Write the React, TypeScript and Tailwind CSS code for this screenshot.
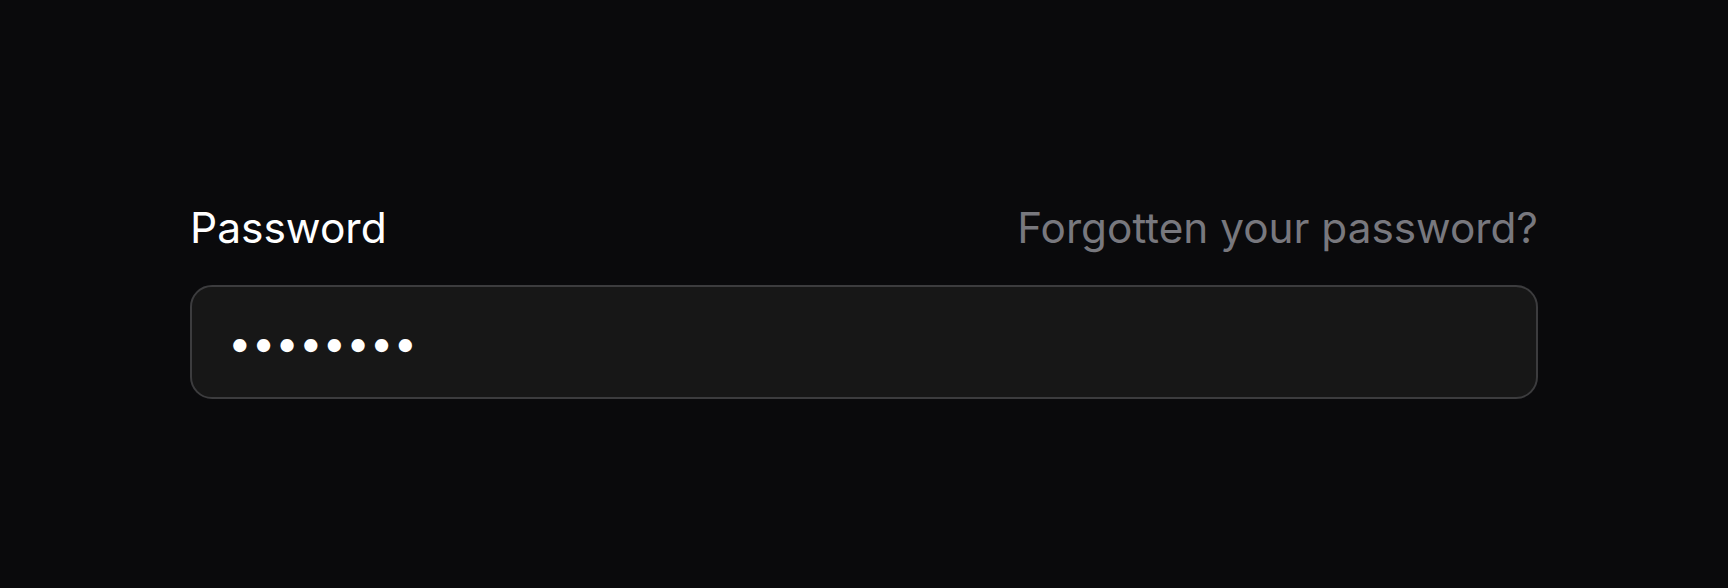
import React from 'react';

const App: React.FC = () => {
  return (
    <div
      className="min-h-screen w-full bg-[#0a0a0c] pt-[204px]"
      style={{ fontFamily: 'Inter, "Noto Sans", sans-serif' }}
    >
      <div className="mx-auto w-[1348px]">
        {/* Label row */}
        <div className="flex items-baseline justify-between">
          <label htmlFor="password" className="text-[42.5px] leading-[48px] text-white">
            Password
          </label>
          <a href="#" className="text-[42.3px] leading-[48px] text-[#78787e]">
            Forgotten your password?
          </a>
        </div>

        {/* Input */}
        <input
          id="password"
          type="password"
          defaultValue="12345678"
          readOnly
          className="mt-[33px] block h-[114px] w-full rounded-[22px] border-2 border-[#3c3c3e] bg-[#171717] px-[36px] text-[42px] text-white outline-none"
          style={{ fontFamily: 'Inter, "Noto Sans", sans-serif' }}
        />
      </div>
    </div>
  );
};

export default App;
